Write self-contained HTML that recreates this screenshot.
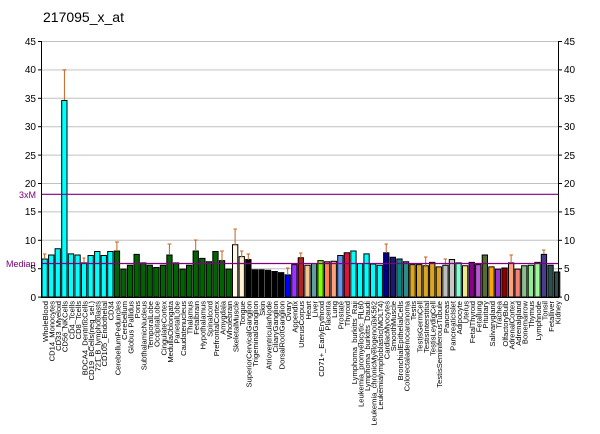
<!DOCTYPE html>
<html><head><meta charset="utf-8"><style>
body{margin:0;background:#fff;width:600px;height:434px;overflow:hidden}
svg{display:block}
text{font-family:"Liberation Sans",Arial,sans-serif}
.l text{font-size:7.6px;fill:#000}
.ax{font-size:10px;fill:#000}
</style></head><body>
<svg width="600" height="434" viewBox="0 0 600 434" xmlns="http://www.w3.org/2000/svg">
<text x="43" y="22" style="font-size:14px">217095_x_at</text>
<g stroke="#c0c0c0" stroke-width="1">
<line x1="41" x2="559" y1="41.5" y2="41.5"/>
<line x1="41" x2="559" y1="69.9" y2="69.9" stroke="#e0e0e0" stroke-width="2"/>
<line x1="41" x2="559" y1="98.3" y2="98.3"/>
<line x1="41" x2="559" y1="126.7" y2="126.7"/>
<line x1="41" x2="559" y1="155.1" y2="155.1"/>
<line x1="41" x2="559" y1="183.5" y2="183.5"/>
<line x1="41" x2="559" y1="211.9" y2="211.9"/>
<line x1="41" x2="559" y1="240.3" y2="240.3"/>
<line x1="41" x2="559" y1="268.7" y2="268.7"/>
</g>
<g transform="translate(0,297) scale(1,-5.68)" stroke="#000" stroke-width="1">
<g vector-effect="non-scaling-stroke">
<rect x="42.0" y="0" width="5.3" height="6.7" fill="#00ffff" vector-effect="non-scaling-stroke"/>
<rect x="48.6" y="0" width="5.3" height="7.4" fill="#00ffff" vector-effect="non-scaling-stroke"/>
<rect x="55.1" y="0" width="5.3" height="8.5" fill="#00ffff" vector-effect="non-scaling-stroke"/>
<rect x="61.7" y="0" width="5.3" height="34.6" fill="#00ffff" vector-effect="non-scaling-stroke"/>
<rect x="68.3" y="0" width="5.3" height="7.6" fill="#00ffff" vector-effect="non-scaling-stroke"/>
<rect x="74.9" y="0" width="5.3" height="7.4" fill="#00ffff" vector-effect="non-scaling-stroke"/>
<rect x="81.4" y="0" width="5.3" height="6.0" fill="#00ffff" vector-effect="non-scaling-stroke"/>
<rect x="88.0" y="0" width="5.3" height="7.3" fill="#00ffff" vector-effect="non-scaling-stroke"/>
<rect x="94.6" y="0" width="5.3" height="8.0" fill="#00ffff" vector-effect="non-scaling-stroke"/>
<rect x="101.1" y="0" width="5.3" height="7.3" fill="#00ffff" vector-effect="non-scaling-stroke"/>
<rect x="107.7" y="0" width="5.3" height="8.0" fill="#00ffff" vector-effect="non-scaling-stroke"/>
<rect x="114.3" y="0" width="5.3" height="8.1" fill="#006400" vector-effect="non-scaling-stroke"/>
<rect x="120.8" y="0" width="5.3" height="4.9" fill="#006400" vector-effect="non-scaling-stroke"/>
<rect x="127.4" y="0" width="5.3" height="5.6" fill="#006400" vector-effect="non-scaling-stroke"/>
<rect x="134.0" y="0" width="5.3" height="7.5" fill="#006400" vector-effect="non-scaling-stroke"/>
<rect x="140.6" y="0" width="5.3" height="6.0" fill="#006400" vector-effect="non-scaling-stroke"/>
<rect x="147.1" y="0" width="5.3" height="5.6" fill="#006400" vector-effect="non-scaling-stroke"/>
<rect x="153.7" y="0" width="5.3" height="5.2" fill="#006400" vector-effect="non-scaling-stroke"/>
<rect x="160.3" y="0" width="5.3" height="5.6" fill="#006400" vector-effect="non-scaling-stroke"/>
<rect x="166.8" y="0" width="5.3" height="7.4" fill="#006400" vector-effect="non-scaling-stroke"/>
<rect x="173.4" y="0" width="5.3" height="6.0" fill="#006400" vector-effect="non-scaling-stroke"/>
<rect x="180.0" y="0" width="5.3" height="4.9" fill="#006400" vector-effect="non-scaling-stroke"/>
<rect x="186.5" y="0" width="5.3" height="5.6" fill="#006400" vector-effect="non-scaling-stroke"/>
<rect x="193.1" y="0" width="5.3" height="8.1" fill="#006400" vector-effect="non-scaling-stroke"/>
<rect x="199.7" y="0" width="5.3" height="6.8" fill="#006400" vector-effect="non-scaling-stroke"/>
<rect x="206.3" y="0" width="5.3" height="6.2" fill="#006400" vector-effect="non-scaling-stroke"/>
<rect x="212.8" y="0" width="5.3" height="8.0" fill="#006400" vector-effect="non-scaling-stroke"/>
<rect x="219.4" y="0" width="5.3" height="6.4" fill="#006400" vector-effect="non-scaling-stroke"/>
<rect x="226.0" y="0" width="5.3" height="4.9" fill="#006400" vector-effect="non-scaling-stroke"/>
<rect x="232.5" y="0" width="5.3" height="9.2" fill="#fff8e4" vector-effect="non-scaling-stroke"/>
<rect x="239.1" y="0" width="5.3" height="7.1" fill="#fff0d0" vector-effect="non-scaling-stroke"/>
<rect x="245.7" y="0" width="5.3" height="6.6" fill="#000" vector-effect="non-scaling-stroke"/>
<rect x="252.2" y="0" width="5.3" height="4.8" fill="#000" vector-effect="non-scaling-stroke"/>
<rect x="258.8" y="0" width="5.3" height="4.8" fill="#000" vector-effect="non-scaling-stroke"/>
<rect x="265.4" y="0" width="5.3" height="4.7" fill="#000" vector-effect="non-scaling-stroke"/>
<rect x="272.0" y="0" width="5.3" height="4.5" fill="#000" vector-effect="non-scaling-stroke"/>
<rect x="278.5" y="0" width="5.3" height="4.3" fill="#000" vector-effect="non-scaling-stroke"/>
<rect x="285.1" y="0" width="5.3" height="3.9" fill="#0000ff" vector-effect="non-scaling-stroke"/>
<rect x="291.7" y="0" width="5.3" height="5.7" fill="#9933ff" vector-effect="non-scaling-stroke"/>
<rect x="298.2" y="0" width="5.3" height="6.9" fill="#b22222" vector-effect="non-scaling-stroke"/>
<rect x="304.8" y="0" width="5.3" height="5.6" fill="#f5c890" vector-effect="non-scaling-stroke"/>
<rect x="311.4" y="0" width="5.3" height="5.9" fill="#5f9ea0" vector-effect="non-scaling-stroke"/>
<rect x="317.9" y="0" width="5.3" height="6.4" fill="#7fff00" vector-effect="non-scaling-stroke"/>
<rect x="324.5" y="0" width="5.3" height="6.2" fill="#ff7f50" vector-effect="non-scaling-stroke"/>
<rect x="331.1" y="0" width="5.3" height="6.3" fill="#ffa07a" vector-effect="non-scaling-stroke"/>
<rect x="337.7" y="0" width="5.3" height="7.3" fill="#6495ed" vector-effect="non-scaling-stroke"/>
<rect x="344.2" y="0" width="5.3" height="7.8" fill="#dc143c" vector-effect="non-scaling-stroke"/>
<rect x="350.8" y="0" width="5.3" height="8.1" fill="#00ffff" vector-effect="non-scaling-stroke"/>
<rect x="357.4" y="0" width="5.3" height="5.9" fill="#00ffff" vector-effect="non-scaling-stroke"/>
<rect x="363.9" y="0" width="5.3" height="7.6" fill="#00ffff" vector-effect="non-scaling-stroke"/>
<rect x="370.5" y="0" width="5.3" height="5.8" fill="#00ffff" vector-effect="non-scaling-stroke"/>
<rect x="377.1" y="0" width="5.3" height="5.6" fill="#00ffff" vector-effect="non-scaling-stroke"/>
<rect x="383.6" y="0" width="5.3" height="7.8" fill="#00008b" vector-effect="non-scaling-stroke"/>
<rect x="390.2" y="0" width="5.3" height="7.0" fill="#191970" vector-effect="non-scaling-stroke"/>
<rect x="396.8" y="0" width="5.3" height="6.7" fill="#008b8b" vector-effect="non-scaling-stroke"/>
<rect x="403.4" y="0" width="5.3" height="6.2" fill="#2e8b8b" vector-effect="non-scaling-stroke"/>
<rect x="409.9" y="0" width="5.3" height="5.7" fill="#daa520" vector-effect="non-scaling-stroke"/>
<rect x="416.5" y="0" width="5.3" height="5.7" fill="#daa520" vector-effect="non-scaling-stroke"/>
<rect x="423.1" y="0" width="5.3" height="5.5" fill="#daa520" vector-effect="non-scaling-stroke"/>
<rect x="429.6" y="0" width="5.3" height="6.1" fill="#daa520" vector-effect="non-scaling-stroke"/>
<rect x="436.2" y="0" width="5.3" height="5.3" fill="#daa520" vector-effect="non-scaling-stroke"/>
<rect x="442.8" y="0" width="5.3" height="5.6" fill="#bebebe" vector-effect="non-scaling-stroke"/>
<rect x="449.3" y="0" width="5.3" height="6.6" fill="#c8c8c8" vector-effect="non-scaling-stroke"/>
<rect x="455.9" y="0" width="5.3" height="6.0" fill="#7fffd4" vector-effect="non-scaling-stroke"/>
<rect x="462.5" y="0" width="5.3" height="5.5" fill="#f0e68c" vector-effect="non-scaling-stroke"/>
<rect x="469.1" y="0" width="5.3" height="6.1" fill="#8b008b" vector-effect="non-scaling-stroke"/>
<rect x="475.6" y="0" width="5.3" height="5.7" fill="#ba55d3" vector-effect="non-scaling-stroke"/>
<rect x="482.2" y="0" width="5.3" height="7.4" fill="#556b2f" vector-effect="non-scaling-stroke"/>
<rect x="488.8" y="0" width="5.3" height="5.3" fill="#ffa500" vector-effect="non-scaling-stroke"/>
<rect x="495.3" y="0" width="5.3" height="4.9" fill="#9932cc" vector-effect="non-scaling-stroke"/>
<rect x="501.9" y="0" width="5.3" height="5.1" fill="#8b0000" vector-effect="non-scaling-stroke"/>
<rect x="508.5" y="0" width="5.3" height="6.0" fill="#ffa07a" vector-effect="non-scaling-stroke"/>
<rect x="515.0" y="0" width="5.3" height="4.9" fill="#fa8072" vector-effect="non-scaling-stroke"/>
<rect x="521.6" y="0" width="5.3" height="5.5" fill="#8fbc8f" vector-effect="non-scaling-stroke"/>
<rect x="528.2" y="0" width="5.3" height="5.6" fill="#90ee90" vector-effect="non-scaling-stroke"/>
<rect x="534.8" y="0" width="5.3" height="6.1" fill="#98fb98" vector-effect="non-scaling-stroke"/>
<rect x="541.3" y="0" width="5.3" height="7.5" fill="#483d8b" vector-effect="non-scaling-stroke"/>
<rect x="547.9" y="0" width="5.3" height="5.6" fill="#2f4f4f" vector-effect="non-scaling-stroke"/>
<rect x="554.5" y="0" width="5.3" height="4.4" fill="#2f4f4f" vector-effect="non-scaling-stroke"/>
</g>
</g>
<g stroke="#c8601e" stroke-width="1">
<line x1="64.4" x2="64.4" y1="100" y2="69.9"/><line x1="62.5" x2="66.3" y1="69.9" y2="69.9"/>
<line x1="44.6" x2="44.6" y1="259" y2="254"/><line x1="43" x2="46.5" y1="254" y2="254"/>
<line x1="84.0" x2="84.0" y1="263" y2="258"/><line x1="82.5" x2="85.5" y1="258" y2="258"/>
<line x1="116.9" x2="116.9" y1="251" y2="242"/><line x1="115" x2="119" y1="242" y2="242"/>
<line x1="169.4" x2="169.4" y1="255" y2="244"/><line x1="167.5" x2="171.5" y1="244" y2="244"/>
<line x1="195.7" x2="195.7" y1="251" y2="240"/><line x1="194" x2="197.5" y1="240" y2="240"/>
<line x1="222.0" x2="222.0" y1="261" y2="251"/><line x1="220" x2="224" y1="251" y2="251"/>
<line x1="235.1" x2="235.1" y1="245" y2="229"/><line x1="233.5" x2="237" y1="229" y2="229"/>
<line x1="241.7" x2="241.7" y1="257" y2="251"/><line x1="240" x2="243.5" y1="251" y2="251"/>
<line x1="248.3" x2="248.3" y1="260" y2="254"/><line x1="246.5" x2="250" y1="254" y2="254"/>
<line x1="287.7" x2="287.7" y1="275" y2="268"/><line x1="286" x2="289.5" y1="268" y2="268"/>
<line x1="300.8" x2="300.8" y1="258" y2="253"/><line x1="299" x2="302.5" y1="253" y2="253"/>
<line x1="386.2" x2="386.2" y1="253" y2="244"/><line x1="384.5" x2="388" y1="244" y2="244"/>
<line x1="425.7" x2="425.7" y1="266" y2="257"/><line x1="424" x2="427.5" y1="257" y2="257"/>
<line x1="445.4" x2="445.4" y1="265" y2="259"/><line x1="443.5" x2="447" y1="259" y2="259"/>
<line x1="511.1" x2="511.1" y1="263" y2="255"/><line x1="509.5" x2="513" y1="255" y2="255"/>
<line x1="543.9" x2="543.9" y1="254" y2="250"/><line x1="542" x2="545.5" y1="250" y2="250"/>
</g>
<line x1="41" x2="559" y1="194.3" y2="194.3" stroke="#800080" stroke-width="1.2"/>
<line x1="41" x2="559" y1="263.5" y2="263.5" stroke="#800080" stroke-width="1.2"/>
<text x="19" y="198" style="font-size:9px;fill:#800080">3xM</text>
<text x="6" y="267" style="font-size:9px;fill:#800080">Median</text>
<g stroke="#000" stroke-width="1">
<line x1="41.5" x2="41.5" y1="41" y2="298"/>
<line x1="558.5" x2="558.5" y1="41" y2="298"/>
<line x1="41" x2="559" y1="297.5" y2="297.5"/>
<line x1="38" x2="41" y1="41.5" y2="41.5"/><line x1="38" x2="41" y1="69.9" y2="69.9"/><line x1="38" x2="41" y1="98.3" y2="98.3"/><line x1="38" x2="41" y1="126.7" y2="126.7"/><line x1="38" x2="41" y1="155.1" y2="155.1"/><line x1="38" x2="41" y1="183.5" y2="183.5"/><line x1="38" x2="41" y1="211.9" y2="211.9"/><line x1="38" x2="41" y1="240.3" y2="240.3"/><line x1="38" x2="41" y1="268.7" y2="268.7"/><line x1="38" x2="41" y1="297.1" y2="297.1"/>
<line x1="559" x2="562" y1="41.5" y2="41.5"/><line x1="559" x2="562" y1="69.9" y2="69.9"/><line x1="559" x2="562" y1="98.3" y2="98.3"/><line x1="559" x2="562" y1="126.7" y2="126.7"/><line x1="559" x2="562" y1="155.1" y2="155.1"/><line x1="559" x2="562" y1="183.5" y2="183.5"/><line x1="559" x2="562" y1="211.9" y2="211.9"/><line x1="559" x2="562" y1="240.3" y2="240.3"/><line x1="559" x2="562" y1="268.7" y2="268.7"/><line x1="559" x2="562" y1="297.1" y2="297.1"/>
</g>
<g class="ax" text-anchor="end">
<text x="36" y="45">45</text><text x="36" y="73">40</text><text x="36" y="102">35</text><text x="36" y="130">30</text><text x="36" y="159">25</text><text x="36" y="187">20</text><text x="36" y="215">15</text><text x="36" y="244">10</text><text x="36" y="272">5</text><text x="36" y="301">0</text>
</g>
<g class="ax">
<text x="564" y="45">45</text><text x="564" y="73">40</text><text x="564" y="102">35</text><text x="564" y="130">30</text><text x="564" y="159">25</text><text x="564" y="187">20</text><text x="564" y="215">15</text><text x="564" y="244">10</text><text x="564" y="272">5</text><text x="564" y="301">0</text>
</g>
<g class="l" text-anchor="end">
<text transform="translate(48.0,301) rotate(-90)">WholeBlood</text>
<text transform="translate(54.6,301) rotate(-90)">CD14_Monocytes</text>
<text transform="translate(61.1,301) rotate(-90)">CD33_Myeloid</text>
<text transform="translate(67.7,301) rotate(-90)">CD56_NKCells</text>
<text transform="translate(74.3,301) rotate(-90)">CD4_Tcells</text>
<text transform="translate(80.9,301) rotate(-90)">CD8_Tcells</text>
<text transform="translate(87.4,301) rotate(-90)">BDCA4_DentriticCells</text>
<text transform="translate(94.0,301) rotate(-90)">CD19_BCells(neg_sel.)</text>
<text transform="translate(100.6,301) rotate(-90)">721_B_lymphoblasts</text>
<text transform="translate(107.1,301) rotate(-90)">CD105_Endothelial</text>
<text transform="translate(113.7,301) rotate(-90)">CD34</text>
<text transform="translate(120.3,301) rotate(-90)">CerebellumPeduncles</text>
<text transform="translate(126.8,301) rotate(-90)">Cerebellum</text>
<text transform="translate(133.4,301) rotate(-90)">Globus Pallidus</text>
<text transform="translate(140.0,301) rotate(-90)">Pons</text>
<text transform="translate(146.6,301) rotate(-90)">SubthalamicNucleus</text>
<text transform="translate(153.1,301) rotate(-90)">TemporalLobe</text>
<text transform="translate(159.7,301) rotate(-90)">OccipitalLobe</text>
<text transform="translate(166.3,301) rotate(-90)">CingulateCortex</text>
<text transform="translate(172.8,301) rotate(-90)">MedullaOblongata</text>
<text transform="translate(179.4,301) rotate(-90)">ParietalLobe</text>
<text transform="translate(186.0,301) rotate(-90)">Caudatenucleus</text>
<text transform="translate(192.5,301) rotate(-90)">Thalamus</text>
<text transform="translate(199.1,301) rotate(-90)">Fetalbrain</text>
<text transform="translate(205.7,301) rotate(-90)">Hypothalamus</text>
<text transform="translate(212.3,301) rotate(-90)">Spinalcord</text>
<text transform="translate(218.8,301) rotate(-90)">PrefrontalCortex</text>
<text transform="translate(225.4,301) rotate(-90)">Amygdala</text>
<text transform="translate(232.0,301) rotate(-90)">Wholebrain</text>
<text transform="translate(238.5,301) rotate(-90)">SkeletalMuscle</text>
<text transform="translate(245.1,301) rotate(-90)">Tongue</text>
<text transform="translate(251.7,301) rotate(-90)">SuperiorCervicalGanglion</text>
<text transform="translate(258.2,301) rotate(-90)">TrigeminalGanglion</text>
<text transform="translate(264.8,301) rotate(-90)">Skin</text>
<text transform="translate(271.4,301) rotate(-90)">AtrioventricularNode</text>
<text transform="translate(278.0,301) rotate(-90)">CiliaryGanglion</text>
<text transform="translate(284.5,301) rotate(-90)">DorsalRootGanglion</text>
<text transform="translate(291.1,301) rotate(-90)">Ovary</text>
<text transform="translate(297.7,301) rotate(-90)">Appendix</text>
<text transform="translate(304.2,301) rotate(-90)">UterusCorpus</text>
<text transform="translate(310.8,301) rotate(-90)">Heart</text>
<text transform="translate(317.4,301) rotate(-90)">Liver</text>
<text transform="translate(323.9,301) rotate(-90)">CD71+_EarlyErythroid</text>
<text transform="translate(330.5,301) rotate(-90)">Placenta</text>
<text transform="translate(337.1,301) rotate(-90)">Lung</text>
<text transform="translate(343.7,301) rotate(-90)">Prostate</text>
<text transform="translate(350.2,301) rotate(-90)">Thyroid</text>
<text transform="translate(356.8,301) rotate(-90)">Lymphoma_burkitts_Raji</text>
<text transform="translate(363.4,301) rotate(-90)">Leukemia_promyelocytic_HL60</text>
<text transform="translate(369.9,301) rotate(-90)">Lymphoma_burkitts_Daudi</text>
<text transform="translate(376.5,301) rotate(-90)">Leukemia_chronicMyelogenousK562</text>
<text transform="translate(383.1,301) rotate(-90)">Leukemialymphoblastic(MOLT4)</text>
<text transform="translate(389.6,301) rotate(-90)">CardiacMyocytes</text>
<text transform="translate(396.2,301) rotate(-90)">SmoothMuscle</text>
<text transform="translate(402.8,301) rotate(-90)">BronchialEpithelialCells</text>
<text transform="translate(409.4,301) rotate(-90)">Colorectaladenocarcinoma</text>
<text transform="translate(415.9,301) rotate(-90)">Testis</text>
<text transform="translate(422.5,301) rotate(-90)">TestisGermCell</text>
<text transform="translate(429.1,301) rotate(-90)">TestisInterstitial</text>
<text transform="translate(435.6,301) rotate(-90)">TestisLeydigCell</text>
<text transform="translate(442.2,301) rotate(-90)">TestisSeminiferousTubule</text>
<text transform="translate(448.8,301) rotate(-90)">Pancreas</text>
<text transform="translate(455.3,301) rotate(-90)">PancreaticIslet</text>
<text transform="translate(461.9,301) rotate(-90)">Adipocyte</text>
<text transform="translate(468.5,301) rotate(-90)">Uterus</text>
<text transform="translate(475.1,301) rotate(-90)">FetalThyroid</text>
<text transform="translate(481.6,301) rotate(-90)">Fetallung</text>
<text transform="translate(488.2,301) rotate(-90)">Pituitary</text>
<text transform="translate(494.8,301) rotate(-90)">Salivarygland</text>
<text transform="translate(501.3,301) rotate(-90)">Trachea</text>
<text transform="translate(507.9,301) rotate(-90)">OlfactoryBulb</text>
<text transform="translate(514.5,301) rotate(-90)">AdrenalCortex</text>
<text transform="translate(521.0,301) rotate(-90)">Adrenalgland</text>
<text transform="translate(527.6,301) rotate(-90)">Bonemarrow</text>
<text transform="translate(534.2,301) rotate(-90)">Thymus</text>
<text transform="translate(540.8,301) rotate(-90)">Lymphnode</text>
<text transform="translate(547.3,301) rotate(-90)">Tonsil</text>
<text transform="translate(553.9,301) rotate(-90)">Fetalliver</text>
<text transform="translate(560.5,301) rotate(-90)">Kidney</text>
</g>
</svg>
</body></html>
